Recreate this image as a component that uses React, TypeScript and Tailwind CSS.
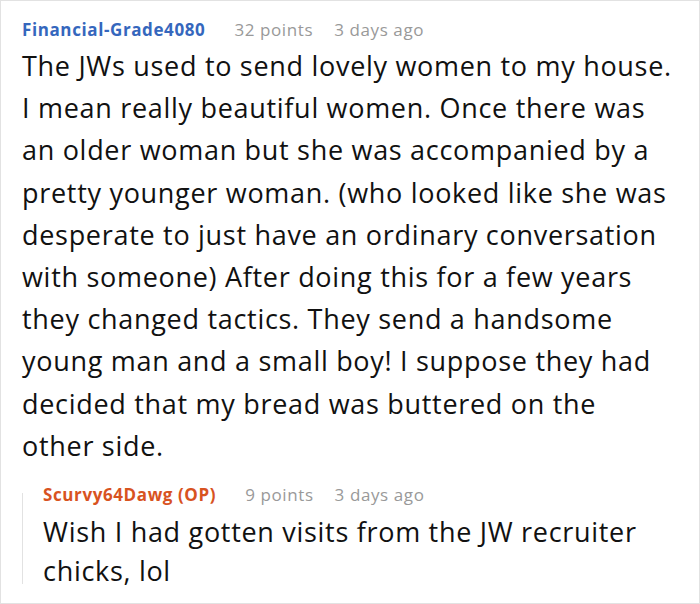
export default function App() {
  return (
    <div
      className="h-[604px] w-[700px] border border-[#e2e2e2] bg-white pl-[21px] pr-[26px] pt-[17px]"
      style={{ fontFamily: '"Open Sans", "Noto Sans", sans-serif' }}
    >
      <Comment
        author="Financial-Grade4080"
        authorClass="text-[#3567bd]"
        points="32 points"
        age="3 days ago"
        bodyClass="mt-[3px] leading-[42.2px]"
        body="The JWs used to send lovely women to my house. I mean really beautiful women. Once there was an older woman but she was accompanied by a pretty younger woman. (who looked like she was desperate to just have an ordinary conversation with someone) After doing this for a few years they changed tactics. They send a handsome young man and a small boy! I suppose they had decided that my bread was buttered on the other side."
      />
      <div className="mt-[16px] flex">
        <div className="mb-[6px] mt-[10px] w-px shrink-0 bg-[#e2e2e2]" />
        <div className="ml-5">
          <Comment
            author="Scurvy64Dawg (OP)"
            authorClass="text-[#d8531f]"
            points="9 points"
            age="3 days ago"
            bodyClass="mt-[6px] leading-[38.5px]"
            body="Wish I had gotten visits from the JW recruiter chicks, lol"
          />
        </div>
      </div>
    </div>
  );
}

function Comment({
  author,
  authorClass,
  points,
  age,
  body,
  bodyClass,
}: {
  author: string;
  authorClass: string;
  points: string;
  age: string;
  body: string;
  bodyClass: string;
}) {
  return (
    <div>
      <div className="flex items-baseline text-[17px] leading-6 tracking-[0.6px]">
        <span className={`font-bold ${authorClass}`}>{author}</span>
        <span className="ml-[29px] text-[#999]">{points}</span>
        <span className="ml-[21px] text-[#999]">{age}</span>
      </div>
      <p className={`text-[27px] tracking-[0.7px] text-[#111] ${bodyClass}`}>{body}</p>
    </div>
  );
}
